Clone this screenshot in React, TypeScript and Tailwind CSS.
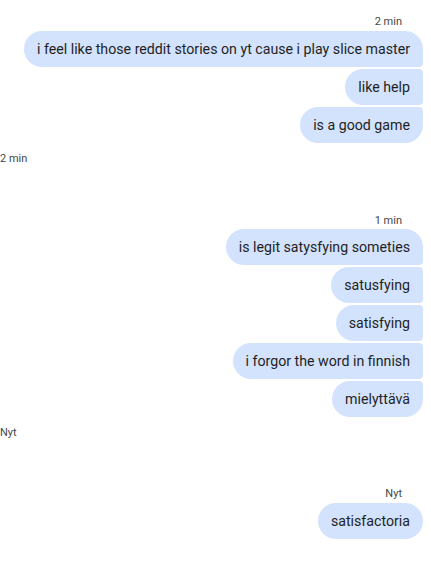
import React from "react";

const font = { fontFamily: "Roboto, 'Noto Sans', Arial, sans-serif" };

type Pos = "first" | "middle" | "last" | "single";

function Bubble({ text, pos }: { text: string; pos: Pos }) {
  const r =
    pos === "single"
      ? "rounded-[18px]"
      : pos === "first"
      ? "rounded-l-[18px] rounded-tr-[18px] rounded-br-[4px]"
      : pos === "last"
      ? "rounded-l-[18px] rounded-tr-[4px] rounded-br-[18px]"
      : "rounded-l-[18px] rounded-r-[4px]";
  return (
    <div className={`bg-[#d3e3fd] text-[#1f1f1f] text-[14.2px] leading-[20px] px-[13px] py-2 ${r}`}>
      {text}
    </div>
  );
}

function RightTime({ t, className = "" }: { t: string; className?: string }) {
  return (
    <div className={`self-end mr-[29px] text-[11px] leading-[16px] text-[#444746] ${className}`}>{t}</div>
  );
}

function LeftTime({ t, className = "" }: { t: string; className?: string }) {
  return (
    <div className={`self-start text-[11px] leading-[16px] text-[#444746] ${className}`}>{t}</div>
  );
}

function Group({ msgs }: { msgs: string[] }) {
  return (
    <div className="flex flex-col items-end gap-[2px] pr-2">
      {msgs.map((m, i) => (
        <Bubble
          key={i}
          text={m}
          pos={msgs.length === 1 ? "single" : i === 0 ? "first" : i === msgs.length - 1 ? "last" : "middle"}
        />
      ))}
    </div>
  );
}

export default function App() {
  return (
    <div className="w-[431px] h-[566px] bg-white flex flex-col" style={font}>
      <RightTime t="2 min" className="mt-[14px] mb-[1px]" />
      <Group
        msgs={[
          "i feel like those reddit stories on yt cause i play slice master",
          "like help",
          "is a good game",
        ]}
      />
      <LeftTime t="2 min" className="mt-[8px]" />
      <RightTime t="1 min" className="mt-[46px] mb-[0px]" />
      <Group
        msgs={[
          "is legit satysfying someties",
          "satusfying",
          "satisfying",
          "i forgor the word in finnish",
          "mielyttävä",
        ]}
      />
      <LeftTime t="Nyt" className="mt-[8px]" />
      <RightTime t="Nyt" className="mt-[45px] mb-[1px]" />
      <Group msgs={["satisfactoria"]} />
    </div>
  );
}
